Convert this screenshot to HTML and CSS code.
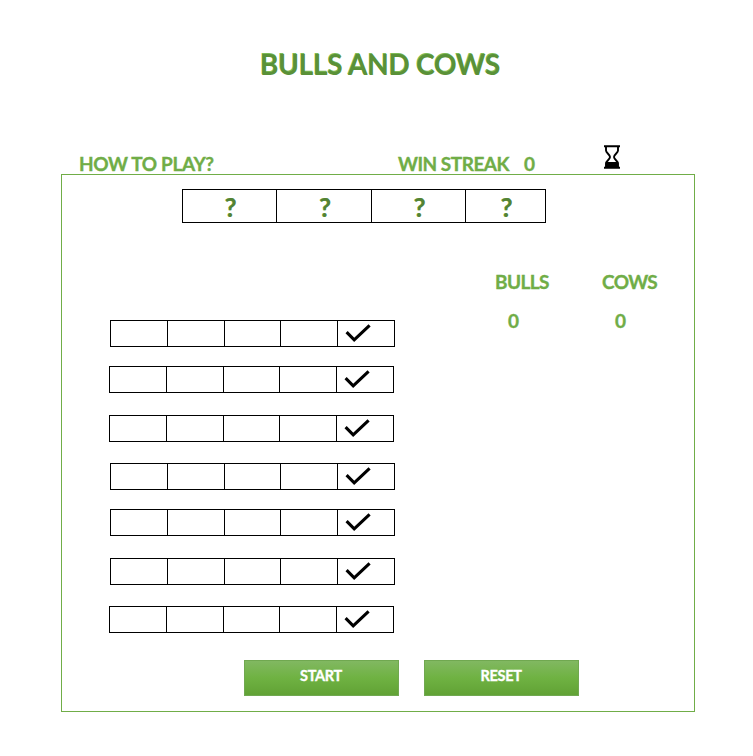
FILE: index.html
```html
<!DOCTYPE html>
<html lang="en">
<head>
<meta charset="utf-8">
<title>Bulls and Cows</title>
<link rel="stylesheet" href="styles.css">
</head>
<body>
<svg width="0" height="0" class="defs"><defs><symbol id="check" viewBox="0 0 26 18"><path d="M1.6 8.2 9.2 15.8 24.6 1.4" fill="none" stroke="#000" stroke-width="3.1"/></symbol></defs></svg>
<h1 class="title">BULLS AND COWS</h1>
<header class="bar">
<a class="how">HOW TO PLAY?</a>
<span class="streak">WIN STREAK</span>
<span class="count">0</span>
<svg class="timer" width="18" height="24" viewBox="0 0 18 24"><path d="M1 1.3H17M1 22.7H17" stroke="#000" stroke-width="2"/><path d="M3 2V5.5C3 8 7 9.5 7 12S3 16 3 18.5V22M15 2V5.5C15 8 11 9.5 11 12S15 16 15 18.5V22" fill="none" stroke="#000" stroke-width="1.9"/><path d="M3 22V18.5L4 17H14L15 18.5V22Z"/></svg>
</header>
<main class="panel">
<div class="secret"><span>?</span><span>?</span><span>?</span><span>?</span></div>
<div class="game">
<div class="guesses">
<div class="row first"><i></i><i></i><i></i><i></i><i><svg class="check"><use href="#check"/></svg></i></div>
<div class="row shift"><i></i><i></i><i></i><i></i><i><svg class="check"><use href="#check"/></svg></i></div>
<div class="row shift wide"><i></i><i></i><i></i><i></i><i><svg class="check"><use href="#check"/></svg></i></div>
<div class="row mid"><i></i><i></i><i></i><i></i><i><svg class="check"><use href="#check"/></svg></i></div>
<div class="row"><i></i><i></i><i></i><i></i><i><svg class="check"><use href="#check"/></svg></i></div>
<div class="row wide"><i></i><i></i><i></i><i></i><i><svg class="check"><use href="#check"/></svg></i></div>
<div class="row shift mid"><i></i><i></i><i></i><i></i><i><svg class="check"><use href="#check"/></svg></i></div>
</div>
<div class="scores">
<div class="score"><span class="name">BULLS</span><span class="value">0</span></div>
<div class="score"><span class="name">COWS</span><span class="value">0</span></div>
</div>
</div>
<div class="actions"><button>START</button><button>RESET</button></div>
</main>
</body>
</html>
```

FILE: styles.css
```css
* { box-sizing: border-box; }
body {
  margin: 0;
  height: 756px;
  background: #fff;
  color: #70ad47;
  font: bold 19px/24px Lato, "Liberation Sans", sans-serif;
  letter-spacing: -0.35px;
  -webkit-text-stroke: 0.35px;
  overflow: hidden;
}
.defs { display: block; height: 0; }
.title {
  margin: 0;
  padding: 44px 0 0 260px;
  height: 145px;
  font-size: 28px;
  line-height: 40px;
  letter-spacing: -0.25px;
  color: #5a9138;
  text-shadow: -0.6px -0.6px 0 #7dbb55;
  -webkit-text-stroke: 0;
  white-space: nowrap;
}
.bar { display: flex; height: 29px; padding-left: 79px; white-space: nowrap; }
.bar .how { width: 319px; padding-top: 7px; }
.bar .streak { width: 126px; padding-top: 7px; letter-spacing: -0.5px; }
.bar .count { width: 79px; padding-top: 7px; }
.panel {
  margin-left: 61px;
  width: 634px;
  height: 538px;
  border: 1px solid #70ad47;
  padding-top: 14px;
}
.secret {
  display: grid;
  grid-template-columns: 94px 95px 94px 80px;
  grid-template-rows: 32px;
  width: 364px;
  height: 34px;
  margin-left: 120px;
  border: 1px solid #000;
  border-left: 0;
}
.secret span {
  border-left: 1px solid #000;
  padding-left: 2px;
  text-align: center;
  font-size: 26px;
  line-height: 34px;
  color: #548235;
  text-shadow: -0.5px -0.5px 0 #7dbb55;
  -webkit-text-stroke: 0;
}
.game { display: flex; height: 437px; }
.guesses { flex: none; width: 433px; padding: 97px 0 0 48px; }
.row {
  display: grid;
  grid-template-columns: 57px 57px 56px 57px 58px;
  width: 285px;
  height: 27px;
  margin-top: 19px;
  border: 1px solid #000;
  border-left: 0;
}
.row i { border-left: 1px solid #000; }
.row i:last-child { padding: 3px 0 0 7px; }
.row.first { margin-top: 0; }
.row.shift { margin-left: -1px; }
.row.mid { margin-top: 21px; }
.row.wide { margin-top: 22px; }
.check { display: block; width: 26px; height: 18px; }
.scores { display: flex; padding-top: 47px; }
.score { display: flex; flex: none; flex-direction: column; width: 107px; gap: 15px; white-space: nowrap; }
.name { letter-spacing: -0.6px; }
.value { padding-left: 13px; }
.actions { display: flex; gap: 25px; padding-left: 182px; }
button {
  width: 155px;
  height: 36px;
  padding: 0 1px 4px 0;
  border: 1px solid #70a850;
  background: linear-gradient(#81b861, #6fb242 50%, #61a235);
  color: #fff;
  font: bold 14.5px/20px Lato, "Liberation Sans", sans-serif;
  letter-spacing: -0.3px;
}
```
